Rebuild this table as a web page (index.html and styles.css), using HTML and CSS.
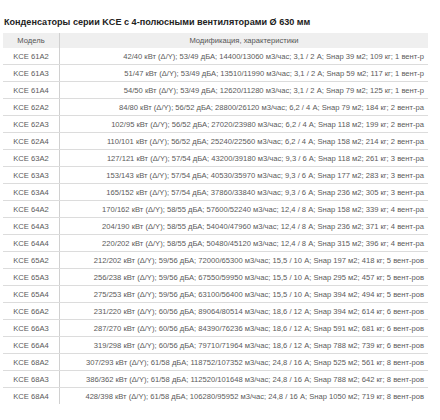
FILE: index.html
```html
<!DOCTYPE html>
<html lang="ru">
<head>
<meta charset="utf-8">
<link rel="stylesheet" href="styles.css">
</head>
<body>
<h1 class="title">Конденсаторы серии KCE с 4-полюсными вентиляторами Ø 630 мм</h1>
<table class="spec">
<thead>
<tr><th class="c-model">Модель</th><th class="c-mod">Модификация, характеристики</th></tr>
</thead>
<tbody>
<tr><td class="c-model">KCE 61A2</td><td class="c-mod">42/40 кВт (Δ/Y); 53/49 дБА; 14400/13060 м3/час; 3,1 / 2 А; Sнар 39 м2; 109 кг; 1 вент-р</td></tr>
<tr><td class="c-model">KCE 61A3</td><td class="c-mod">51/47 кВт (Δ/Y); 53/49 дБА; 13510/11990 м3/час; 3,1 / 2 А; Sнар 59 м2; 117 кг; 1 вент-р</td></tr>
<tr><td class="c-model">KCE 61A4</td><td class="c-mod">54/50 кВт (Δ/Y); 53/49 дБА; 12620/11280 м3/час; 3,1 / 2 А; Sнар 79 м2; 125 кг; 1 вент-р</td></tr>
<tr><td class="c-model">KCE 62A2</td><td class="c-mod">84/80 кВт (Δ/Y); 56/52 дБА; 28800/26120 м3/час; 6,2 / 4 А; Sнар 79 м2; 184 кг; 2 вент-ра</td></tr>
<tr><td class="c-model">KCE 62A3</td><td class="c-mod">102/95 кВт (Δ/Y); 56/52 дБА; 27020/23980 м3/час; 6,2 / 4 А; Sнар 118 м2; 199 кг; 2 вент-ра</td></tr>
<tr><td class="c-model">KCE 62A4</td><td class="c-mod">110/101 кВт (Δ/Y); 56/52 дБА; 25240/22560 м3/час; 6,2 / 4 А; Sнар 158 м2; 214 кг; 2 вент-ра</td></tr>
<tr><td class="c-model">KCE 63A2</td><td class="c-mod">127/121 кВт (Δ/Y); 57/54 дБА; 43200/39180 м3/час; 9,3 / 6 А; Sнар 118 м2; 261 кг; 3 вент-ра</td></tr>
<tr><td class="c-model">KCE 63A3</td><td class="c-mod">153/143 кВт (Δ/Y); 57/54 дБА; 40530/35970 м3/час; 9,3 / 6 А; Sнар 177 м2; 283 кг; 3 вент-ра</td></tr>
<tr><td class="c-model">KCE 63A4</td><td class="c-mod">165/152 кВт (Δ/Y); 57/54 дБА; 37860/33840 м3/час; 9,3 / 6 А; Sнар 236 м2; 305 кг; 3 вент-ра</td></tr>
<tr><td class="c-model">KCE 64A2</td><td class="c-mod">170/162 кВт (Δ/Y); 58/55 дБА; 57600/52240 м3/час; 12,4 / 8 А; Sнар 158 м2; 339 кг; 4 вент-ра</td></tr>
<tr><td class="c-model">KCE 64A3</td><td class="c-mod">204/190 кВт (Δ/Y); 58/55 дБА; 54040/47960 м3/час; 12,4 / 8 А; Sнар 236 м2; 371 кг; 4 вент-ра</td></tr>
<tr><td class="c-model">KCE 64A4</td><td class="c-mod">220/202 кВт (Δ/Y); 58/55 дБА; 50480/45120 м3/час; 12,4 / 8 А; Sнар 315 м2; 396 кг; 4 вент-ра</td></tr>
<tr><td class="c-model">KCE 65A2</td><td class="c-mod">212/202 кВт (Δ/Y); 59/56 дБА; 72000/65300 м3/час; 15,5 / 10 А; Sнар 197 м2; 418 кг; 5 вент-ров</td></tr>
<tr><td class="c-model">KCE 65A3</td><td class="c-mod">256/238 кВт (Δ/Y); 59/56 дБА; 67550/59950 м3/час; 15,5 / 10 А; Sнар 295 м2; 457 кг; 5 вент-ров</td></tr>
<tr><td class="c-model">KCE 65A4</td><td class="c-mod">275/253 кВт (Δ/Y); 59/56 дБА; 63100/56400 м3/час; 15,5 / 10 А; Sнар 394 м2; 494 кг; 5 вент-ров</td></tr>
<tr><td class="c-model">KCE 66A2</td><td class="c-mod">231/220 кВт (Δ/Y); 60/56 дБА; 89064/80514 м3/час; 18,6 / 12 А; Sнар 394 м2; 614 кг; 6 вент-ров</td></tr>
<tr><td class="c-model">KCE 66A3</td><td class="c-mod">287/270 кВт (Δ/Y); 60/56 дБА; 84390/76236 м3/час; 18,6 / 12 А; Sнар 591 м2; 681 кг; 6 вент-ров</td></tr>
<tr><td class="c-model">KCE 66A4</td><td class="c-mod">319/298 кВт (Δ/Y); 60/56 дБА; 79710/71964 м3/час; 18,6 / 12 А; Sнар 788 м2; 739 кг; 6 вент-ров</td></tr>
<tr><td class="c-model">KCE 68A2</td><td class="c-mod">307/293 кВт (Δ/Y); 61/58 дБА; 118752/107352 м3/час; 24,8 / 16 А; Sнар 525 м2; 561 кг; 8 вент-ров</td></tr>
<tr><td class="c-model">KCE 68A3</td><td class="c-mod">386/362 кВт (Δ/Y); 61/58 дБА; 112520/101648 м3/час; 24,8 / 16 А; Sнар 788 м2; 642 кг; 8 вент-ров</td></tr>
<tr class="last"><td class="c-model">KCE 68A4</td><td class="c-mod">428/398 кВт (Δ/Y); 61/58 дБА; 106280/95952 м3/час; 24,8 / 16 А; Sнар 1050 м2; 719 кг; 8 вент-ров</td></tr>
</tbody>
</table>
</body>
</html>
```

FILE: styles.css
```css
html, body {
  margin: 0;
  padding: 0;
  background: #ffffff;
}
body {
  font-family: "Liberation Sans", Arial, sans-serif;
  color: #5a5a5a;
}
.title {
  margin: 0;
  padding: 17px 0 5px 4px;
  font-size: 9.1px;
  line-height: 11px;
  font-weight: bold;
  color: #222222;
  white-space: nowrap;
}
.spec {
  margin-left: 3px;
  width: 425px;
  border-collapse: collapse;
  table-layout: fixed;
  font-size: 7.6px;
}
.spec th {
  background: #efefef;
  font-weight: normal;
  color: #555555;
  height: 15px;
  padding: 0;
  text-align: center;
}
.spec td {
  height: 16px;
  padding: 0;
  border-bottom: 1px solid #dcdcdc;
  white-space: nowrap;
}
.spec tr.last td {
  border-bottom: none;
}
.spec .c-model {
  width: 56px;
  text-align: center;
  border-right: 1px solid #d0d0d0;
}
.spec td.c-mod {
  text-align: right;
  padding-right: 4px;
}
```
